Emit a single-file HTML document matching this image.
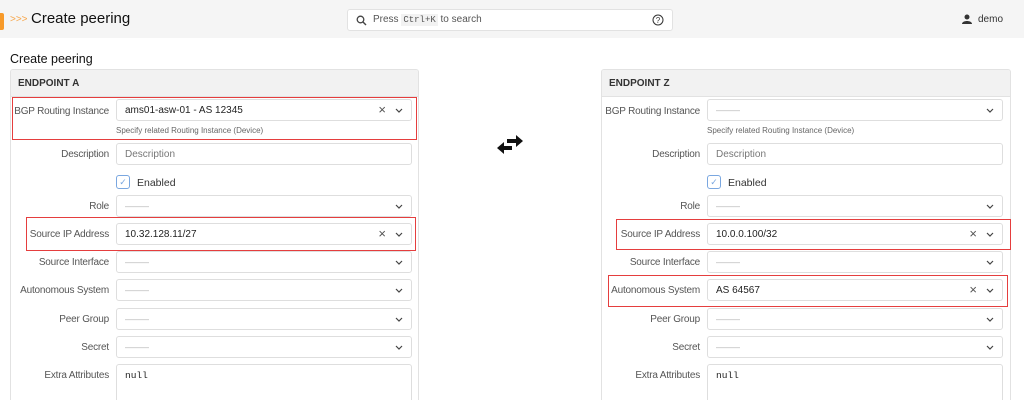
<!DOCTYPE html>
<html style="overflow:hidden;width:1024px;height:400px"><head><meta charset="utf-8"><style>
*{box-sizing:border-box;margin:0;padding:0}
body{width:1024px;height:400px;overflow:hidden;background:#fff;font-family:"Liberation Sans",sans-serif;font-size:10.5px;color:#333;position:relative}
.hdr{position:absolute;left:0;top:0;width:1024px;height:38px;background:#f5f5f5}
.a{position:absolute}
.card{position:absolute;top:69px;height:331px;border:1px solid #e2e2e2;border-bottom:none;border-radius:3px 3px 0 0;background:#fff;overflow:hidden}
.ch{height:27px;background:#f2f2f2;border-bottom:1px solid #e2e2e2;font-weight:bold;font-size:10px;color:#333;padding:8px 0 0 7px}
.lb{position:absolute;width:98px;text-align:right;color:#555;font-size:10px;white-space:nowrap;letter-spacing:-0.2px}
.in{position:absolute;left:105px;width:296px;height:22px;border:1px solid #dedede;border-radius:3px;padding:5px 8px;font-size:10px;color:#222;white-space:nowrap}
.ph{color:#aaa;font-size:8px}
.cv{position:absolute;right:8px;top:8px}
.x{position:absolute;right:25px;top:4px;font-size:13px;color:#555;line-height:12px}
.red{position:absolute;border:1px solid #e53e3e}
.help{position:absolute;left:105px;font-size:8px;color:#666;white-space:nowrap}
.cb{position:absolute;left:105px;width:14px;height:14px;border:1px solid #7aa7e0;border-radius:3px;font-size:9px;color:#7aa7e0;text-align:center;line-height:12px}
</style></head><body>
<div class="hdr"></div>
<div class="a" style="left:0;top:13px;width:4px;height:17px;background:#f79a2a;border-radius:0 2px 2px 0"></div>
<div class="a" style="left:10px;top:14px;color:#f7a64a;font-size:10px">&gt;&gt;&gt;</div>
<div class="a" style="left:31px;top:10px;font-size:15px;color:#111">Create peering</div>
<div class="a" style="left:347px;top:9px;width:326px;height:22px;background:#fff;border:1px solid #e2e2e2;border-radius:3px">
 <svg class="a" style="left:8px;top:5px" width="11" height="11" viewBox="0 0 11 11"><circle cx="4.5" cy="4.5" r="3.3" fill="none" stroke="#444" stroke-width="1.3"/><path d="M7 7l3 3" stroke="#444" stroke-width="1.4"/></svg>
 <span class="a" style="left:25px;top:4px;color:#555;font-size:10px">Press <span style="background:#f2f2f2;font-family:'Liberation Mono',monospace;font-size:9px;padding:1px 2px">Ctrl+K</span> to search</span>
 <svg class="a" style="left:304px;top:4px" width="12" height="12" viewBox="0 0 12 12"><circle cx="6" cy="6" r="5" fill="none" stroke="#333" stroke-width="1"/><text x="6" y="9" font-size="8" text-anchor="middle" fill="#333" font-family="Liberation Sans">?</text></svg>
</div>
<svg class="a" style="left:962px;top:14px" width="10" height="10" viewBox="0 0 10 10"><circle cx="5" cy="3" r="2.5" fill="#333"/><path d="M0 10c0-4 10-4 10 0z" fill="#333"/></svg>
<div class="a" style="left:978px;top:14px;font-size:10px;color:#333">demo</div>
<div class="a" style="left:10px;top:52px;font-size:12.5px;color:#111">Create peering</div>

<svg class="a" style="left:496px;top:134px" width="28" height="24" viewBox="0 0 28 24"><path d="M11 5h9V1l7 6-7 6V9h-9z" fill="#111"/><path d="M16 12H8V8l-7 6 7 6v-4h8z" fill="#111"/></svg>

<div class="card" style="left:10px;width:409px">
 <div class="ch">ENDPOINT A</div>
 <div class="lb" style="top:36px">BGP Routing Instance</div>
 <div class="in" style="top:29px">ams01-asw-01 - AS 12345<span class="x">×</span><svg class="cv" width="8" height="5" viewBox="0 0 8 5"><path d="M1 1l3 3 3-3" fill="none" stroke="#444" stroke-width="1.2"/></svg></div>
 <div class="help" style="top:56px">Specify related Routing Instance (Device)</div>
 <div class="lb" style="top:79px">Description</div>
 <div class="in" style="top:73px;color:#777">Description</div>
 <div class="cb" style="top:105px">✓</div><div class="a" style="left:126px;top:107px;font-size:10.5px">Enabled</div>
 <div class="lb" style="top:131px">Role</div>
 <div class="in" style="top:125px"><span class="ph">———</span><svg class="cv" width="8" height="5" viewBox="0 0 8 5"><path d="M1 1l3 3 3-3" fill="none" stroke="#444" stroke-width="1.2"/></svg></div>
 <div class="lb" style="top:159px">Source IP Address</div>
 <div class="in" style="top:153px">10.32.128.11/27<span class="x">×</span><svg class="cv" width="8" height="5" viewBox="0 0 8 5"><path d="M1 1l3 3 3-3" fill="none" stroke="#444" stroke-width="1.2"/></svg></div>
 <div class="lb" style="top:187px">Source Interface</div>
 <div class="in" style="top:181px"><span class="ph">———</span><svg class="cv" width="8" height="5" viewBox="0 0 8 5"><path d="M1 1l3 3 3-3" fill="none" stroke="#444" stroke-width="1.2"/></svg></div>
 <div class="lb" style="top:215px">Autonomous System</div>
 <div class="in" style="top:209px"><span class="ph">———</span><svg class="cv" width="8" height="5" viewBox="0 0 8 5"><path d="M1 1l3 3 3-3" fill="none" stroke="#444" stroke-width="1.2"/></svg></div>
 <div class="lb" style="top:244px">Peer Group</div>
 <div class="in" style="top:238px"><span class="ph">———</span><svg class="cv" width="8" height="5" viewBox="0 0 8 5"><path d="M1 1l3 3 3-3" fill="none" stroke="#444" stroke-width="1.2"/></svg></div>
 <div class="lb" style="top:272px">Secret</div>
 <div class="in" style="top:266px"><span class="ph">———</span><svg class="cv" width="8" height="5" viewBox="0 0 8 5"><path d="M1 1l3 3 3-3" fill="none" stroke="#444" stroke-width="1.2"/></svg></div>
 <div class="lb" style="top:300px">Extra Attributes</div>
 <div class="in" style="top:294px;height:50px;font-family:'Liberation Mono',monospace;font-size:9.5px">null</div>
</div>

<div class="card" style="left:601px;width:410px">
 <div class="ch">ENDPOINT Z</div>
 <div class="lb" style="top:36px">BGP Routing Instance</div>
 <div class="in" style="top:29px"><span class="ph">———</span><svg class="cv" width="8" height="5" viewBox="0 0 8 5"><path d="M1 1l3 3 3-3" fill="none" stroke="#444" stroke-width="1.2"/></svg></div>
 <div class="help" style="top:56px">Specify related Routing Instance (Device)</div>
 <div class="lb" style="top:79px">Description</div>
 <div class="in" style="top:73px;color:#777">Description</div>
 <div class="cb" style="top:105px">✓</div><div class="a" style="left:126px;top:107px;font-size:10.5px">Enabled</div>
 <div class="lb" style="top:131px">Role</div>
 <div class="in" style="top:125px"><span class="ph">———</span><svg class="cv" width="8" height="5" viewBox="0 0 8 5"><path d="M1 1l3 3 3-3" fill="none" stroke="#444" stroke-width="1.2"/></svg></div>
 <div class="lb" style="top:159px">Source IP Address</div>
 <div class="in" style="top:153px">10.0.0.100/32<span class="x">×</span><svg class="cv" width="8" height="5" viewBox="0 0 8 5"><path d="M1 1l3 3 3-3" fill="none" stroke="#444" stroke-width="1.2"/></svg></div>
 <div class="lb" style="top:187px">Source Interface</div>
 <div class="in" style="top:181px"><span class="ph">———</span><svg class="cv" width="8" height="5" viewBox="0 0 8 5"><path d="M1 1l3 3 3-3" fill="none" stroke="#444" stroke-width="1.2"/></svg></div>
 <div class="lb" style="top:215px">Autonomous System</div>
 <div class="in" style="top:209px">AS 64567<span class="x">×</span><svg class="cv" width="8" height="5" viewBox="0 0 8 5"><path d="M1 1l3 3 3-3" fill="none" stroke="#444" stroke-width="1.2"/></svg></div>
 <div class="lb" style="top:244px">Peer Group</div>
 <div class="in" style="top:238px"><span class="ph">———</span><svg class="cv" width="8" height="5" viewBox="0 0 8 5"><path d="M1 1l3 3 3-3" fill="none" stroke="#444" stroke-width="1.2"/></svg></div>
 <div class="lb" style="top:272px">Secret</div>
 <div class="in" style="top:266px"><span class="ph">———</span><svg class="cv" width="8" height="5" viewBox="0 0 8 5"><path d="M1 1l3 3 3-3" fill="none" stroke="#444" stroke-width="1.2"/></svg></div>
 <div class="lb" style="top:300px">Extra Attributes</div>
 <div class="in" style="top:294px;height:50px;font-family:'Liberation Mono',monospace;font-size:9.5px">null</div>
</div>

<div class="red" style="left:12px;top:97px;width:405px;height:43px"></div>
<div class="red" style="left:26px;top:217px;width:390px;height:34px"></div>
<div class="red" style="left:616px;top:219px;width:395px;height:31px"></div>
<div class="red" style="left:608px;top:275px;width:400px;height:32px"></div>
</body></html>
